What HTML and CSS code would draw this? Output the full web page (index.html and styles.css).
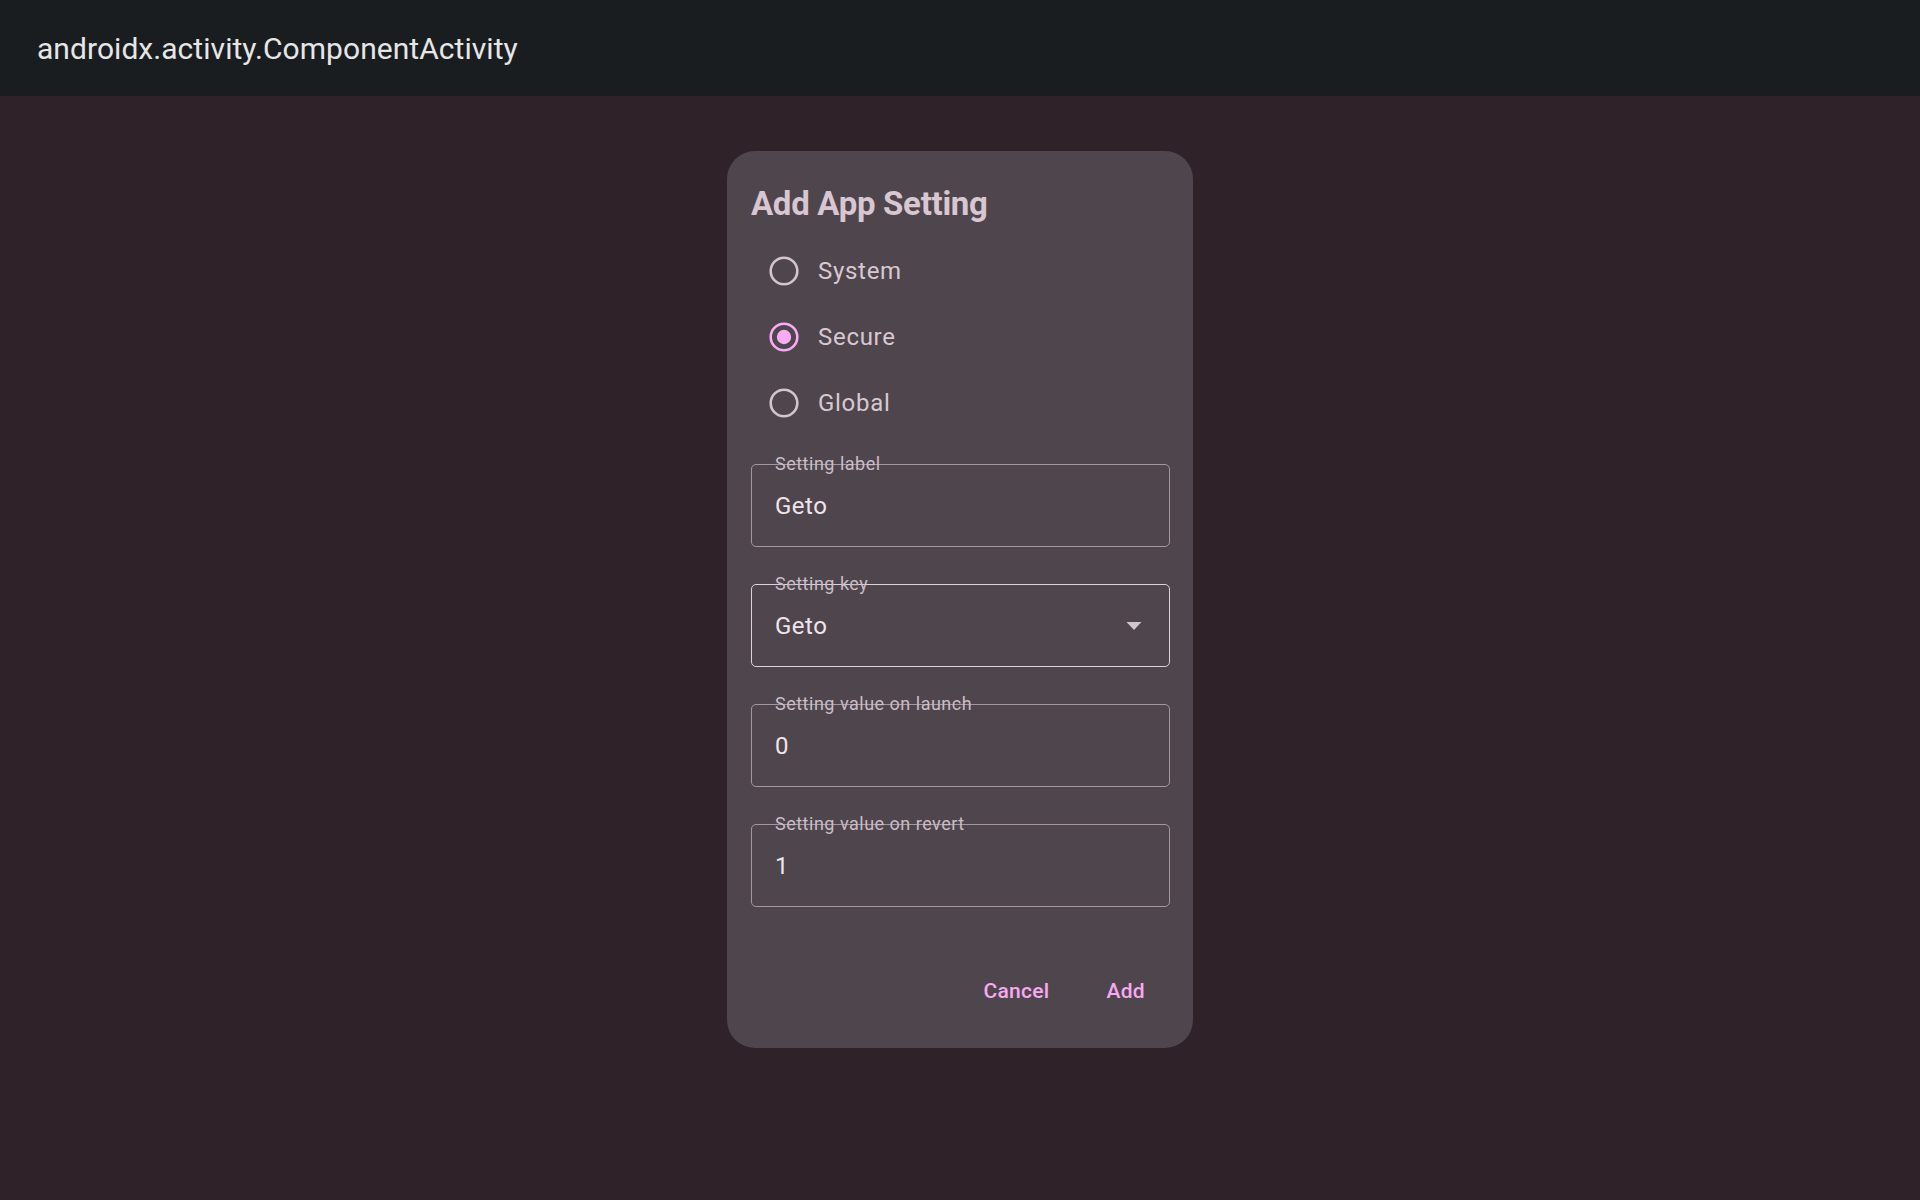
FILE: index.html
```html
<!DOCTYPE html>
<html lang="en">
<head>
<meta charset="utf-8">
<title>androidx.activity.ComponentActivity</title>
<link rel="stylesheet" href="styles.css">
</head>
<body>
  <header class="topbar">
    <span class="topbar-title">androidx.activity.ComponentActivity</span>
  </header>
  <main class="screen">
    <section class="dialog">
      <h1 class="dialog-title">Add App Setting</h1>
      <div class="radio-group">
        <label class="radio-row">
          <svg class="radio" viewBox="0 0 30 30" width="30" height="30"><circle cx="15" cy="15" r="13.3" fill="none" stroke="#d4c4ce" stroke-width="2.6"/></svg>
          <span class="radio-label">System</span>
        </label>
        <label class="radio-row">
          <svg class="radio" viewBox="0 0 30 30" width="30" height="30"><circle cx="15" cy="15" r="13.3" fill="none" stroke="#fbaaf5" stroke-width="2.6"/><circle cx="15" cy="15" r="7.2" fill="#fbaaf5"/></svg>
          <span class="radio-label">Secure</span>
        </label>
        <label class="radio-row">
          <svg class="radio" viewBox="0 0 30 30" width="30" height="30"><circle cx="15" cy="15" r="13.3" fill="none" stroke="#d4c4ce" stroke-width="2.6"/></svg>
          <span class="radio-label">Global</span>
        </label>
      </div>
      <div class="fields">
        <div class="field">
          <span class="field-label">Setting label</span>
          <span class="field-value">Geto</span>
        </div>
        <div class="field field-focused">
          <span class="field-label">Setting key</span>
          <span class="field-value">Geto</span>
          <svg class="dropdown-arrow" viewBox="0 0 16 8" width="16" height="8"><path d="M0.5 0 L15.5 0 L8 8 Z" fill="#d4c4ce"/></svg>
        </div>
        <div class="field">
          <span class="field-label">Setting value on launch</span>
          <span class="field-value">0</span>
        </div>
        <div class="field">
          <span class="field-label">Setting value on revert</span>
          <span class="field-value">1</span>
        </div>
      </div>
      <div class="actions">
        <button class="text-btn">Cancel</button>
        <button class="text-btn">Add</button>
      </div>
    </section>
  </main>
</body>
</html>
```
FILE: styles.css
```css
* { box-sizing: border-box; }

html, body {
  margin: 0;
  padding: 0;
  height: 100%;
}

body {
  background: #2f2329;
  font-family: Roboto, "Noto Sans", sans-serif;
  color: #e8dde4;
  display: flex;
  flex-direction: column;
}

.topbar {
  height: 96px;
  background: #1a1d20;
  display: flex;
  align-items: center;
  padding-left: 37px;
  flex-shrink: 0;
}

.topbar-title {
  font-size: 30px;
  color: #e6e6e6;
  letter-spacing: 0.05px;
}

.screen {
  flex: 1;
  display: flex;
  justify-content: center;
  align-items: flex-start;
  padding-top: 55px;
}

.dialog {
  width: 466px;
  height: 897px;
  background: #4f454d;
  border-radius: 28px;
  padding: 33px 23px 33px 24px;
  display: flex;
  flex-direction: column;
}

.dialog-title {
  margin: 0;
  font-size: 33px;
  line-height: 40px;
  font-weight: 700;
  color: #d8c6d1;
  letter-spacing: -0.3px;
}

.radio-group {
  display: flex;
  flex-direction: column;
  margin-top: 14px;
}

.radio-row {
  height: 66px;
  display: flex;
  align-items: center;
  padding-left: 18px;
  gap: 19px;
}

.radio {
  display: block;
  flex-shrink: 0;
}

.radio-label {
  font-size: 24px;
  letter-spacing: 0.7px;
  color: #d8c8d2;
}

.fields {
  display: flex;
  flex-direction: column;
  gap: 37px;
  margin-top: 28px;
}

.field {
  position: relative;
  height: 83px;
  border: 1.3px solid #a3969f;
  border-radius: 5px;
  display: flex;
  align-items: center;
  padding: 0 24px 0 23px;
}

.field-focused {
  border-color: #ddd2da;
}

.field-label {
  position: absolute;
  left: 23px;
  top: -11px;
  font-size: 18px;
  line-height: 20px;
  letter-spacing: 0.5px;
  color: #cabdc6;
}

.field-value {
  font-size: 24px;
  letter-spacing: 0.5px;
  color: #efe4eb;
  flex: 1;
}

.dropdown-arrow {
  display: block;
  margin-right: 3px;
}

.actions {
  margin-top: auto;
  display: flex;
  justify-content: flex-end;
  gap: 8px;
}

.text-btn {
  background: none;
  border: none;
  height: 48px;
  padding: 0 25px 0 24px;
  font-family: Roboto, "Noto Sans", sans-serif;
  font-size: 21px;
  font-weight: 500;
  letter-spacing: 0.3px;
  color: #f7aaf2;
  cursor: pointer;
}
```
